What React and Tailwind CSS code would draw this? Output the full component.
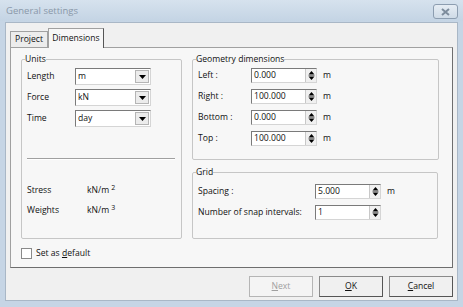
import React from "react";

const Spin = () => (
  <div className="w-[11px] h-full flex flex-col items-center justify-center bg-[#f0f0f0] border-l border-[#c8c8c8]">
    <svg width="7" height="11" viewBox="0 0 7 11">
      <path d="M3.5 1 L6.5 4.5 L0.5 4.5 Z" fill="#000" />
      <path d="M0.5 5.5 H6.5" stroke="#888" strokeWidth="1" />
      <path d="M0.5 6.5 L6.5 6.5 L3.5 10 Z" fill="#000" />
    </svg>
  </div>
);

const SpinInput = ({ value }) => (
  <div className="w-[66px] h-[15px] flex bg-white border border-[#7a7a7a] border-r-[#d5d5d5] border-b-[#d5d5d5]">
    <div className="flex-1 pl-[2px] leading-[13px]">{value}</div>
    <Spin />
  </div>
);

const Combo = ({ value }) => (
  <div className="w-[76px] h-[17px] flex bg-white border border-[#7a7a7a] border-r-[#d5d5d5] border-b-[#d5d5d5]">
    <div className="flex-1 pl-[2px] leading-[15px]">{value}</div>
    <div className="w-[14px] my-[1px] mr-[1px] flex items-center justify-center bg-[#ececec] border border-[#b5b5b5]">
      <svg width="7" height="4" viewBox="0 0 7 4">
        <path d="M0 0 H7 L3.5 4 Z" fill="#000" />
      </svg>
    </div>
  </div>
);

const Field = ({ className = "", children, legend }) => (
  <fieldset className={`border border-[#c6c6c6] rounded-[2px] ${className}`}>
    <legend className="ml-[3px] px-0 leading-[12px]">{legend}</legend>
    {children}
  </fieldset>
);

const U = ({ children }) => <span className="underline underline-offset-[1px]">{children}</span>;

export default function App() {
  return (
    <div className="w-[463px] h-[307px] bg-[#c6d5e5] flex flex-col font-['Open_Sans',sans-serif] text-[8.6px] text-[#111] overflow-hidden">
      {/* title bar */}
      <div className="h-[21px] flex items-center justify-between pl-[6px] pr-[5px] bg-gradient-to-b from-[#d6e2ee] to-[#c4d4e4]">
        <span className="text-[9.5px] text-[#8a98a8] leading-none">General settings</span>
        <div className="w-[25px] h-[15px] mt-[2px] rounded-[3px] border border-[#8c9db0] bg-gradient-to-b from-[#e6edf4] to-[#cfdbe7] flex items-center justify-center">
          <svg width="9" height="8" viewBox="0 0 9 8">
            <path d="M1 1 L8 7 M8 1 L1 7" stroke="#7d8c9c" strokeWidth="2" />
          </svg>
        </div>
      </div>

      {/* client */}
      <div className="flex-1 mx-[5px] mb-[6px] mt-[1px] bg-[#f0f0f0] border border-[#a9b7c6] flex flex-col">
        <div className="px-[4px] pt-[5px]">
          {/* tabs */}
          <div className="flex items-end h-[19px] relative z-10">
            <div className="w-[38px] h-[16px] border border-b-0 border-[#a0a0a0] bg-[#ececec] flex items-center justify-center">Project</div>
            <div className="w-[56px] h-[20px] -mb-[1px] border border-b-0 border-[#a0a0a0] border-r-[#555] bg-[#f7f7f7] flex items-center justify-center">Dimensions</div>
          </div>
          {/* panel */}
          <div className="h-[221px] border border-[#a0a0a0] border-r-[#6e6e6e] border-b-[#6e6e6e] bg-[#f7f7f7] pl-[10px] pt-[5px] flex flex-col">
            <div className="flex gap-[10px]">
              {/* Units */}
              <Field legend="Units" className="w-[161px] h-[186px] flex flex-col">
                <div className="flex flex-col gap-[4px] pl-[5px] pt-[3px]">
                  {[
                    ["Length", "m"],
                    ["Force", "kN"],
                    ["Time", "day"],
                  ].map(([l, v]) => (
                    <div key={l} className="flex items-center h-[17px]">
                      <span className="w-[48px]">{l}</span>
                      <Combo value={v} />
                    </div>
                  ))}
                </div>
                <div className="ml-[5px] mr-[6px] mt-[31px] border-t border-[#a0a0a0] border-b border-b-white" />
                <div className="flex flex-col gap-[7px] pl-[5px] mt-[24px]">
                  <div className="flex items-center h-[13px]">
                    <span className="w-[60px]">Stress</span>
                    <span>kN/m <sup className="text-[7px]">2</sup></span>
                  </div>
                  <div className="flex items-center h-[13px]">
                    <span className="w-[60px]">Weights</span>
                    <span>kN/m <sup className="text-[7px]">3</sup></span>
                  </div>
                </div>
              </Field>

              <div className="flex flex-col gap-[6px]">
                <Field legend="Geometry dimensions" className="w-[247px] h-[107px]">
                  <div className="flex flex-col gap-[6px] pl-[5px] pt-[3px]">
                    {[
                      ["Left :", "0.000"],
                      ["Right :", "100.000"],
                      ["Bottom :", "0.000"],
                      ["Top :", "100.000"],
                    ].map(([l, v]) => (
                      <div key={l} className="flex items-center h-[15px]">
                        <span className="w-[53px]">{l}</span>
                        <SpinInput value={v} />
                        <span className="ml-[6px]">m</span>
                      </div>
                    ))}
                  </div>
                </Field>
                <Field legend="Grid" className="w-[246px] h-[73px]">
                  <div className="flex flex-col gap-[6px] pl-[5px] pt-[6px]">
                    <div className="flex items-center h-[15px]">
                      <span className="w-[117px]">Spacing :</span>
                      <SpinInput value="5.000" />
                      <span className="ml-[6px]">m</span>
                    </div>
                    <div className="flex items-center h-[15px]">
                      <span className="w-[117px] whitespace-nowrap">Number of snap intervals:</span>
                      <SpinInput value="1" />
                    </div>
                  </div>
                </Field>
              </div>
            </div>
            <div className="flex items-center mt-[8px]">
              <div className="w-[11px] h-[11px] border border-[#8a8a8a] bg-white" />
              <span className="ml-[4px]">Set as <U>d</U>efault</span>
            </div>
          </div>
        </div>
        {/* buttons */}
        <div className="flex justify-end gap-[6px] pr-[4px] mt-[8px]">
          <div className="w-[64px] h-[21px] border border-[#b5b5b5] bg-[#f4f4f4] flex items-center justify-center text-[#a0a0a0]"><span><U>N</U>ext</span></div>
          <div className="w-[64px] h-[21px] border border-[#8a8a8a] border-r-[#555] border-b-[#555] bg-[#f0f0f0] flex items-center justify-center"><span><U>O</U>K</span></div>
          <div className="w-[64px] h-[21px] border border-[#8a8a8a] border-r-[#555] border-b-[#555] bg-[#f0f0f0] flex items-center justify-center"><span><U>C</U>ancel</span></div>
        </div>
      </div>
    </div>
  );
}
